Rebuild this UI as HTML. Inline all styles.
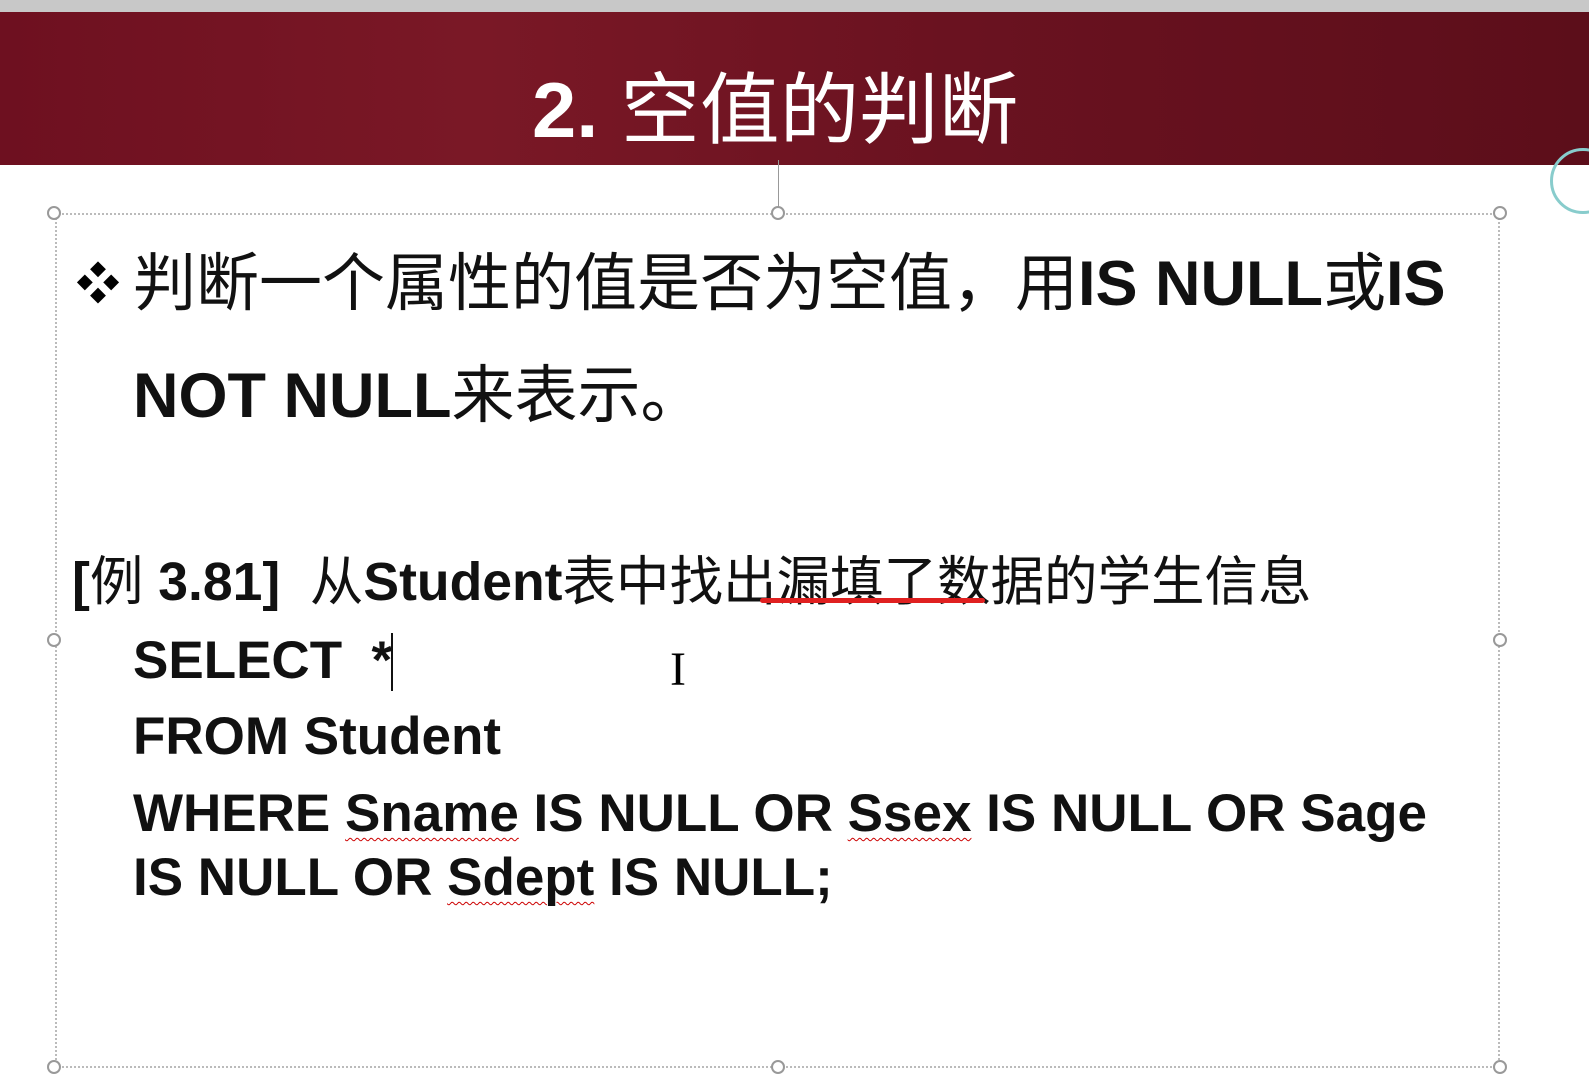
<!DOCTYPE html>
<html><head><meta charset="utf-8"><style>
body{margin:0;width:1589px;height:1090px;overflow:hidden;background:#fff;position:relative;font-family:"Liberation Sans","Noto Sans CJK SC",sans-serif}
.a{position:absolute;white-space:nowrap}
.h{position:absolute;width:14px;height:14px;border:2px solid #999;border-radius:50%;background:#fff;box-sizing:border-box}
.b{font-weight:bold}
.w{text-decoration:underline wavy #c00;text-decoration-thickness:1px;text-underline-offset:6px}
</style></head><body>
<div class="a" style="left:0;top:0;width:1589px;height:12px;background:#c8c8c8"></div>
<div class="a" style="left:0;top:12px;width:1589px;height:153px;background:linear-gradient(90deg,#6e1020,#7a1826 30%,#6a1220 60%,#5c0e1a)"></div>
<div class="a" style="left:532px;top:60px;color:#fff;font-size:78px;line-height:100px;transform:scaleX(1.02);transform-origin:left"><b>2.</b> 空值的判断</div>
<div class="a" style="left:778px;top:160px;width:1px;height:53px;background:#999"></div>
<div class="a" style="left:55px;top:213px;width:1445px;height:855px;border:2px dotted #bbb;box-sizing:border-box"></div>
<div class="h" style="left:47px;top:206px"></div><div class="h" style="left:771px;top:206px"></div><div class="h" style="left:1493px;top:206px"></div>
<div class="h" style="left:47px;top:633px"></div><div class="h" style="left:1493px;top:633px"></div>
<div class="h" style="left:47px;top:1060px"></div><div class="h" style="left:771px;top:1060px"></div><div class="h" style="left:1493px;top:1060px"></div>
<div class="a" style="left:76px;top:250px;font-size:44px;line-height:70px">❖</div>
<div class="a" style="left:133px;top:248px;font-size:63px;line-height:72px;color:#111">判断一个属性的值是否为空值，用<b>IS NULL</b>或<b>IS</b></div>
<div class="a" style="left:133px;top:360px;font-size:63px;line-height:72px;color:#111"><b>NOT NULL</b>来表示。</div>
<div class="a" style="left:72px;top:552px;font-size:53.5px;line-height:62px;color:#111"><b>[</b>例 <b>3.81]</b>&nbsp; 从<b>Student</b>表中找出漏填了数据的学生信息</div>
<div class="a" style="left:760px;top:598px;width:225px;height:5px;background:#e02020;border-radius:3px"></div>
<div class="a b" style="left:133px;top:630px;font-size:53px;line-height:62px;color:#111">SELECT&nbsp; *</div>
<div class="a" style="left:391px;top:633px;width:2px;height:58px;background:#111"></div>
<div class="a" style="left:670px;top:645px;font-size:48px;line-height:50px;font-family:'Liberation Serif',serif">I</div>
<div class="a b" style="left:133px;top:706px;font-size:53px;line-height:62px;color:#111">FROM Student</div>
<div class="a b" style="left:133px;top:783px;font-size:53px;line-height:62px;color:#111">WHERE <span class="w">Sname</span> IS NULL OR <span class="w">Ssex</span> IS NULL OR Sage</div>
<div class="a b" style="left:133px;top:847px;font-size:53px;line-height:62px;color:#111">IS NULL OR <span class="w">Sdept</span> IS NULL;</div>
<div class="a" style="left:1550px;top:148px;width:60px;height:60px;border:3px solid #8cc;border-radius:50%"></div>
</body></html>
